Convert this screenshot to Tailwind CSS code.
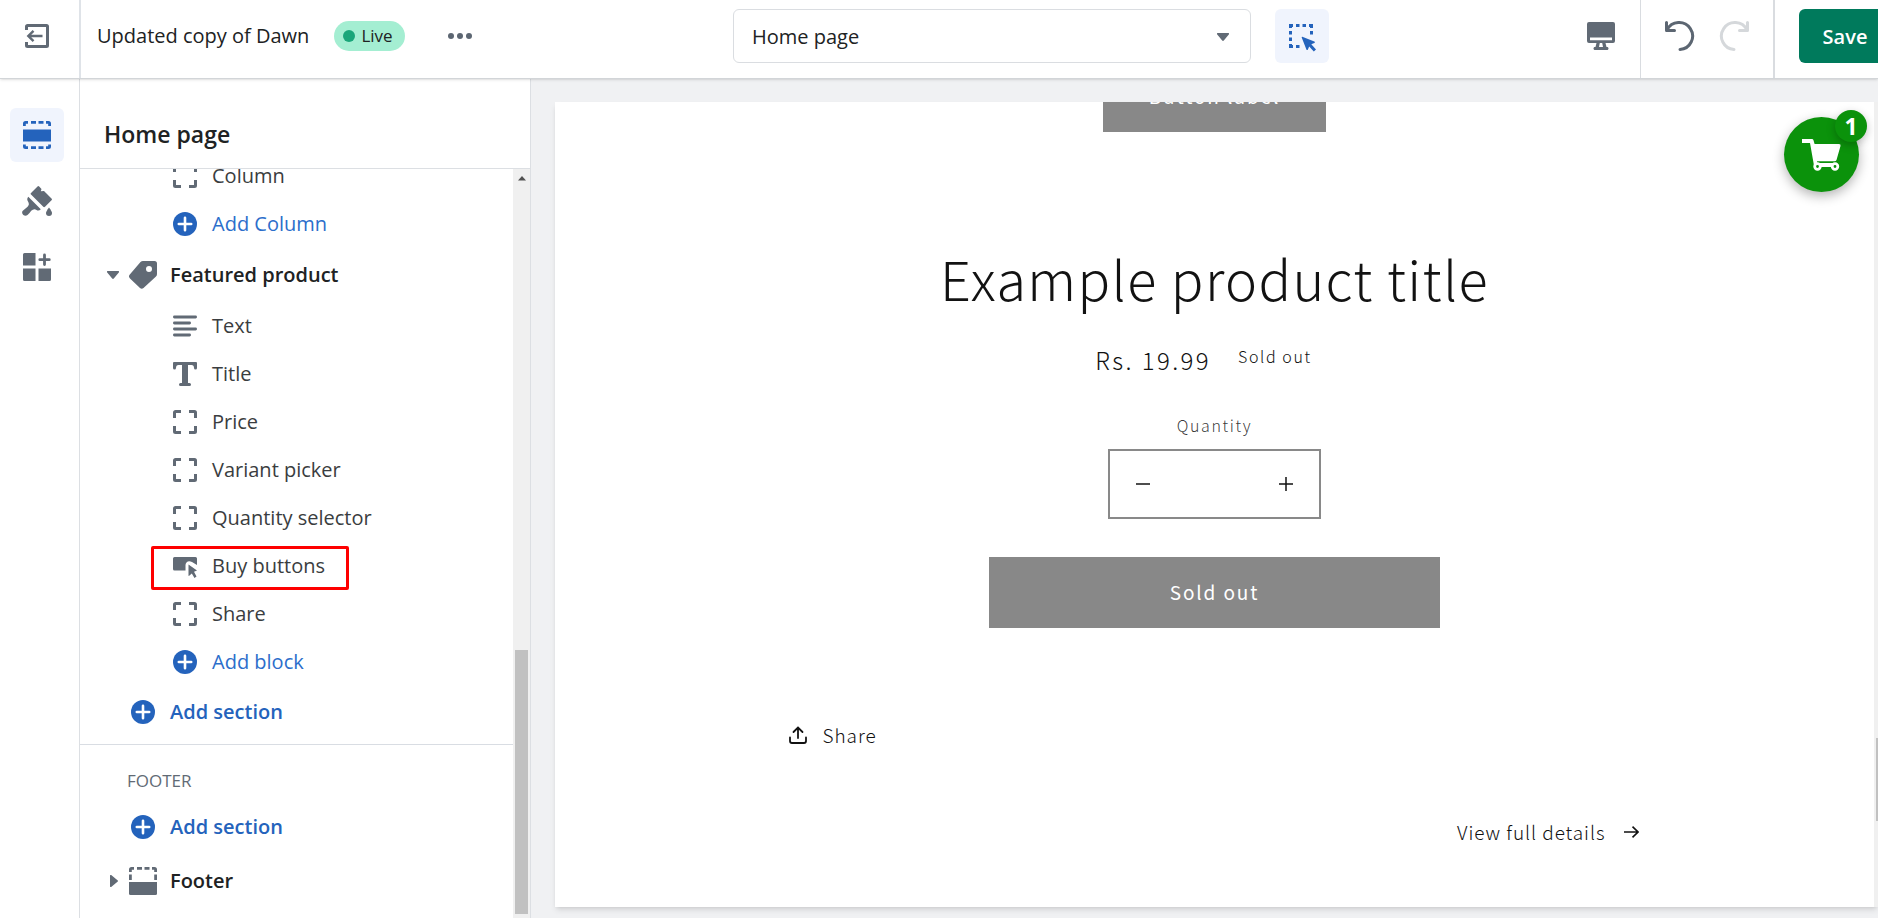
<!DOCTYPE html>
<html lang="en">
<head>
<meta charset="utf-8">
<meta name="viewport" content="width=device-width, initial-scale=1">
<title>Updated copy of Dawn</title>
<script src="https://cdn.jsdelivr.net/npm/@tailwindcss/browser@4"></script>
</head>
<body class="font-['Open_Sans','Noto_Sans',sans-serif] text-[#202223]">
<svg class="hidden" aria-hidden="true">
  <symbol id="block" viewBox="0 0 24 24"><path d="M1.500 8V2.500a1 1 0 0 1 1-1H8M16 1.500h5.500a1 1 0 0 1 1 1V8M22.500 16v5.500a1 1 0 0 1-1 1H16M8 22.500H2.500a1 1 0 0 1-1-1V16" fill="none" stroke="currentColor" stroke-width="3"/></symbol>
  <symbol id="plus" viewBox="0 0 24 24"><circle cx="12" cy="12" r="12" fill="#2463bc"/><path d="M12 5.800v12.400M5.800 12h12.400" stroke="#fff" stroke-width="2.600" stroke-linecap="round"/></symbol>
</svg>
<div class="flex h-screen flex-col overflow-hidden bg-white">
  <header class="relative z-10 flex h-[79px] shrink-0 border-b border-[#d2d5d8] bg-white shadow-sm">
    <div class="flex w-[733px] shrink-0 items-center">
      <div class="flex w-[81px] items-center self-stretch border-r-2 border-[#dfe3e8] pb-[6px] pl-[25px]">
        <button aria-label="Exit" class="text-[#616a75]">
          <svg class="size-6" viewBox="0 0 24 24" fill="none" stroke="currentColor" stroke-width="3"><path d="M1.500 6V2.500a1 1 0 0 1 1-1H21.500a1 1 0 0 1 1 1V21.500a1 1 0 0 1-1 1H2.500a1 1 0 0 1-1-1V18"/><path d="M17.500 12H4M8.500 6.800 3.300 12l5.200 5.200" stroke-width="2.400"/></svg>
        </button>
      </div>
      <div class="flex items-center gap-[25px] pb-[6px] pl-4">
        <h1 class="text-[20px] leading-7">Updated copy of Dawn</h1>
        <span class="flex h-[30px] items-center gap-[6px] rounded-full bg-[#a4eed2] pr-3 pl-[9px] text-[17px] leading-6"><span class="size-3 rounded-full bg-[#1aa67a]"></span>Live</span>
        <button aria-label="More actions" class="ml-[18px] flex gap-[3px]"><span class="size-[6px] rounded-full bg-[#5c6672]"></span><span class="size-[6px] rounded-full bg-[#5c6672]"></span><span class="size-[6px] rounded-full bg-[#5c6672]"></span></button>
      </div>
    </div>
    <div class="flex flex-1 items-start gap-6 pt-[9px]">
      <div class="relative max-w-[518px] flex-1">
        <select aria-label="Page" class="h-[54px] w-full appearance-none rounded-md border border-[#dadde1] bg-white pt-[2px] pl-[18px] text-[20px] text-[#202223]"><option>Home page</option></select>
        <svg class="pointer-events-none absolute top-6 right-[22px] h-2 w-3 text-[#616a75]" viewBox="0 0 12 8" fill="currentColor"><path d="M0 1.200C-.3.500.2 0 .8 0h10.400c.6 0 1.100.500.8 1.200L6.800 7.500c-.4.600-1.200.600-1.600 0z"/></svg>
      </div>
      <button aria-label="Inspector" class="flex size-[54px] items-center justify-center rounded-md bg-[#f0f4fd] pt-1">
        <svg class="h-7 w-[27px] text-[#2463bc]" viewBox="0 0 27 28"><path fill="none" stroke="currentColor" stroke-width="3" d="M0 1.500h4M7 1.500h3.500M13.500 1.500H17M20 1.500h4M1.500 0v4M1.500 7v3.500M1.500 13.500V17M1.500 20v4M0 22.500h4M7 22.500h3.500M22.500 0v4M22.500 7v3.500"/><path fill="currentColor" d="m13.300 12.800 12 4.700c.8.300.8 1.200 0 1.500l-3 1.300 4.700 5.200-2.200 2-4.600-5.100-1.300 3c-.3.800-1.200.7-1.500 0l-4.700-12c-.1-.4.200-.700.600-.600z"/></svg>
      </button>
    </div>
    <div class="flex shrink-0 items-stretch">
      <div class="flex items-center pr-[25px] pb-[6px]">
        <button aria-label="Desktop view" class="text-[#616a75]"><svg class="size-7" viewBox="0 0 28 28"><path fill="currentColor" fill-rule="evenodd" d="M2 0h24a2 2 0 0 1 2 2v17a2 2 0 0 1-2 2h-7.500l1 4H20c1 0 1.500.7 1.500 1.500S21 28 20 28H8c-1 0-1.500-.700-1.500-1.500S7 25 8 25h.500l1-4H2a2 2 0 0 1-2-2V2a2 2 0 0 1 2-2zm1 15.500v2.700h22v-2.700zM12.800 21l-.8 4h4l-.8-4z"/></svg></button>
      </div>
      <div class="flex items-center gap-6 border-r-2 border-l border-[#d9dce0] px-6 pb-[6px]">
        <button aria-label="Undo" class="text-[#5c6672]"><svg class="size-[30px]" viewBox="0 0 30 30" fill="none" stroke="currentColor" stroke-width="3" stroke-linecap="round" stroke-linejoin="round"><path d="M1.500 1.500v8h8M2 9A13.500 13.500 0 1 1 15 28.500"/></svg></button>
        <button aria-label="Redo" disabled class="text-[#d5d8db]"><svg class="size-[30px] -scale-x-100" viewBox="0 0 30 30" fill="none" stroke="currentColor" stroke-width="3" stroke-linecap="round" stroke-linejoin="round"><path d="M1.500 1.500v8h8M2 9A13.500 13.500 0 1 1 15 28.500"/></svg></button>
      </div>
      <div class="pt-[9px] pl-6"><button class="-mr-[13px] h-[54px] w-[92px] rounded-md bg-[#007a5c] pt-[2px] text-[20px] font-semibold text-white">Save</button></div>
    </div>
  </header>

  <div class="flex min-h-0 flex-1">
    <nav class="flex w-20 shrink-0 flex-col gap-3 border-r border-[#dcdfe3] pt-[29px] pl-[10px] text-[#616a75]">
      <button aria-label="Sections" class="flex size-[54px] items-center justify-center rounded-md bg-[#f0f4fd] text-[#2463bc]"><svg class="size-7" viewBox="0 0 28 28"><path fill="currentColor" d="M0 8.500h28v12H0z"/><path fill="none" stroke="currentColor" stroke-width="2.800" d="M1.400 5V2.500q0-1.100 1.100-1.100H5M8 1.400h5M15.500 1.400h5M23 1.400h2.500q1.100 0 1.100 1.100V5M1.400 23.500v2q0 1.100 1.100 1.100H5M8 26.600h5M15.500 26.600h5M23 26.600h2.500q1.100 0 1.100-1.100v-2"/></svg></button>
      <button aria-label="Theme settings" class="flex size-[54px] items-center justify-center"><svg class="size-[30px]" viewBox="0 0 30 30" fill="currentColor"><path d="M15.500.500q.9-.900 1.700 0l2.300 2.500-.7 2.300 3.200-.2 7.500 7.500q.900.900 0 1.700l-6.500 6.500q-.9.800-1.700 0L9 8.500q-.7-.8 0-1.500z"/><path d="m6.300 10.700 12.500 12.500q-2 2-4.300.7-1.800-1-3.700-.2-1.500.6-3.300 3.300l-2 2Q3.500 30.500 1.300 29-.8 26.500.8 24.700l2.400-2q3-2.200 3.500-3.700.500-1.700-.8-3.700-1.500-2.500.4-4.600z"/><path d="M27 21.500q3 4 3 5.500a3 3 0 0 1-6 0q0-1.500 3-5.500z"/></svg></button>
      <button aria-label="App embeds" class="flex size-[54px] items-center justify-center"><svg class="size-7" viewBox="0 0 28 28" fill="currentColor"><path d="M1.500 0h11v12.500H0v-11Q0 0 1.500 0zM0 15.500h12.500V28h-11Q0 28 0 26.500zM15.500 15.500H28v11q0 1.500-1.500 1.500h-11z"/><path d="M21.500 2v9.500M16.800 6.700h9.500" stroke="currentColor" stroke-width="2.800" stroke-linecap="round"/></svg></button>
    </nav>

    <aside class="flex w-[451px] shrink-0 flex-col border-r border-[#dcdfe3]">
      <h2 class="flex h-[90px] shrink-0 items-end border-b border-[#dcdfe3] pb-[18px] pl-6 text-[23px] leading-8 font-semibold">Home page</h2>
      <div class="flex min-h-0 flex-1">
        <div class="min-w-0 flex-1 overflow-hidden">
          <ul class="-mt-[17px] text-[20px] text-[#3a3d40] *:flex *:h-12 *:items-center *:gap-[15px] *:pl-[93px]">
            <li><svg class="size-6 text-[#616a75]"><use href="#block"/></svg><a href="#">Column</a></li>
            <li><svg class="size-6"><use href="#plus"/></svg><button class="text-[#2c6ecb]">Add Column</button></li>
          </ul>
          <div class="flex h-[54px] items-center pl-[27px] text-[#616a75]">
            <svg class="h-2 w-3" viewBox="0 0 12 8" fill="currentColor"><path d="M0 1.200C-.3.500.2 0 .8 0h10.400c.6 0 1.100.500.8 1.200L6.800 7.500c-.4.600-1.200.600-1.600 0z"/></svg>
            <svg class="ml-[10px] size-7" viewBox="0 0 28 28"><path fill="currentColor" fill-rule="evenodd" d="M14 0h11.500Q28 0 28 2.500V13q0 1.500-1 2.500L14.500 27q-1.800 1.500-3.500 0L1 17.500q-2-2-.2-4L11.500 1Q12.500 0 14 0zm6 5a3 3 0 1 0 0 6 3 3 0 0 0 0-6z"/></svg>
            <a href="#" class="ml-[13px] text-[20px] font-semibold text-[#202223]">Featured product</a>
          </div>
          <ul class="text-[20px] text-[#3a3d40] *:flex *:h-12 *:items-center *:gap-[15px] *:pl-[93px]">
            <li><svg class="size-6 text-[#616a75]" viewBox="0 0 24 24" stroke="currentColor" stroke-width="2.800" stroke-linecap="round"><path d="M1.400 3h21.200M1.400 9h15.200M1.400 15h21.200M1.400 21h15.200"/></svg><a href="#">Text</a></li>
            <li><svg class="size-6 text-[#616a75]" viewBox="0 0 24 24" fill="currentColor"><path d="M1 0h22q1 0 1 1v5q0 1.500-1.500 1.500T21 6q0-3-2.500-3H15v18h1.500q1.500 0 1.500 1.500T16.500 24h-9Q6 24 6 22.500T7.500 21H9V3H5.500Q3 3 3 6q0 1.500-1.500 1.500T0 6V1q0-1 1-1z"/></svg><a href="#">Title</a></li>
            <li><svg class="size-6 text-[#616a75]"><use href="#block"/></svg><a href="#">Price</a></li>
            <li><svg class="size-6 text-[#616a75]"><use href="#block"/></svg><a href="#">Variant picker</a></li>
            <li><svg class="size-6 text-[#616a75]"><use href="#block"/></svg><a href="#">Quantity selector</a></li>
            <li class="relative"><svg class="size-6 text-[#616a75]" viewBox="0 0 24 24" fill="currentColor"><path d="M1.500 3h21Q24 3 24 4.500v6.500l-5-3q-3.500-1.500-5.500.5-1 1-1 2.500v5.500h-11Q0 16.500 0 15V4.500Q0 3 1.500 3z"/><path d="m15.500 10.500 8.500 6-3 1.300 2.500 4.700-2 1.500-2.700-4.600-2.600 2.400q-.7.500-.7-.5z"/></svg><a href="#">Buy buttons</a>
              <span class="pointer-events-none absolute top-1 left-[71px] h-11 w-[198px] rounded-xs border-3 border-[#fe0000]"></span></li>
            <li><svg class="size-6 text-[#616a75]"><use href="#block"/></svg><a href="#">Share</a></li>
            <li><svg class="size-6"><use href="#plus"/></svg><button class="text-[#2c6ecb]">Add block</button></li>
          </ul>
          <div class="flex h-[59px] items-start border-b border-[#d9dde3] pt-3 pl-[51px]">
            <button class="flex items-center gap-[15px] text-[20px] leading-7 font-semibold text-[#2463bc]"><svg class="size-6"><use href="#plus"/></svg>Add section</button>
          </div>
          <h3 class="pt-6 pl-[47px] text-[17px] leading-6 text-[#616a75]">FOOTER</h3>
          <div class="pt-5 pl-[51px]">
            <button class="flex items-center gap-[15px] text-[20px] leading-7 font-semibold text-[#2463bc]"><svg class="size-6"><use href="#plus"/></svg>Add section</button>
          </div>
          <div class="flex items-center pt-[26px] pl-[30px] text-[#616a75]">
            <svg class="h-3 w-2" viewBox="0 0 8 12" fill="currentColor"><path d="M1.200 0C.5-.3 0 .2 0 .8v10.400c0 .6.500 1.100 1.200.8l6.300-5.200c.600-.4.600-1.200 0-1.600z"/></svg>
            <svg class="ml-[11px] size-7" viewBox="0 0 28 28"><path fill="currentColor" d="M0 15h28v11.500q0 1.500-1.500 1.500h-25Q0 28 0 26.500z"/><path fill="none" stroke="currentColor" stroke-width="2.800" d="M1.400 5V2.500q0-1.100 1.100-1.100H5M8 1.400h5M15.500 1.400h5M23 1.400h2.500q1.100 0 1.100 1.100V5M1.400 7.500V13M26.600 7.500V13"/></svg>
            <a href="#" class="ml-[13px] text-[20px] leading-7 font-semibold text-[#202223]">Footer</a>
          </div>
        </div>
        <div class="flex w-[17px] shrink-0 flex-col items-center bg-[#f0f0f0] pt-[7px] pb-1">
          <svg class="h-[5px] w-2" viewBox="0 0 8 5"><path fill="#505050" d="M4 0l4 4.500H0z"/></svg>
          <div class="mt-auto h-[264px] w-[13px] bg-[#c1c1c1]"></div>
        </div>
      </div>
    </aside>

    <main class="flex min-w-0 flex-1 bg-[#f0f1f3] pt-[23px] pb-[11px] pl-6">
      <div class="flex flex-1 bg-white font-['Noto_Sans_CJK_JP','Source_Sans_Pro',sans-serif] font-light text-[#121212] shadow-md">
        <div class="relative flex min-w-0 flex-1 flex-col items-center overflow-hidden">
          <button disabled class="-mt-[41px] h-[71px] w-[223px] shrink-0 bg-[#888] text-[19px] font-normal tracking-widest text-white">Button label</button>
          <h2 class="mt-[110px] text-[54px] leading-[72px] tracking-wide">Example product title</h2>
          <div class="mt-7 flex gap-[27px] pr-[22px]"><span class="text-[24px] leading-9 tracking-widest">Rs. 19.99</span><span class="text-[16px] leading-7 tracking-widest">Sold out</span></div>
          <label for="qty" class="mt-[35px] text-[16px] leading-6 tracking-widest text-[#121212]/85">Quantity</label>
          <div class="mt-3 flex h-[70px] w-[213px] border-2 border-[#898989]">
            <button aria-label="Decrease quantity" class="flex w-[66px] items-center justify-center"><svg class="size-[14px]" viewBox="0 0 14 14" stroke="#121212" stroke-width="1.500"><path d="M0 7h14"/></svg></button>
            <input id="qty" type="text" class="min-w-0 flex-1 text-center outline-none">
            <button aria-label="Increase quantity" class="flex w-[66px] items-center justify-center"><svg class="size-[14px]" viewBox="0 0 14 14" stroke="#121212" stroke-width="1.500"><path d="M0 7h14M7 0v14"/></svg></button>
          </div>
          <button disabled class="mt-[38px] h-[71px] w-[451px] shrink-0 bg-[#888] text-[19px] font-normal tracking-widest text-white">Sold out</button>
          <div class="mt-[93px] flex w-[852px] flex-col">
            <button class="flex items-center gap-4 self-start text-[19px] leading-7 tracking-wider"><svg class="size-[18px]" viewBox="0 0 18 18" fill="none" stroke="#121212" stroke-width="1.800" stroke-linecap="round"><path d="M1 11.500V15q0 2 2 2h12q2 0 2-2v-3.500M9 12V2M4.500 6 9 1.600 13.500 6"/></svg>Share</button>
            <a href="#" class="mt-[69px] flex items-center gap-[18px] self-end pr-[2px] text-[19px] leading-7 tracking-wider">View full details<svg class="h-3 w-[15px]" viewBox="0 0 15 12" fill="none" stroke="#121212" stroke-width="1.600"><path d="M0 6h14M8.500.600 14 6l-5.500 5.400"/></svg></a>
          </div>
          <button aria-label="Cart, 1 item" class="absolute top-[15px] right-[15px] flex size-[75px] items-center justify-center rounded-full bg-[#0b920b] shadow-[0_4px_12px_rgba(0,0,0,0.3)]">
            <svg class="h-8 w-[39px]" viewBox="0 0 39 32"><path fill="#fff" d="M0 0h10q1 0 1.400 1l1.200 4H37q2 0 1.500 2L34.500 21q-.5 1.300-2 1.300H15l.3 1.700h17v4h-17q-3 0-3.500-2.500L8 4H0z"/><circle cx="15.500" cy="27.500" r="2.800" fill="#0b920b" stroke="#fff" stroke-width="2.800"/><circle cx="33" cy="27.500" r="2.800" fill="#0b920b" stroke="#fff" stroke-width="2.800"/></svg>
            <span class="absolute -top-[7px] -right-2 flex size-8 items-center justify-center rounded-full bg-[#0b920b] font-['Open_Sans',sans-serif] text-[23px] leading-8 font-bold text-white shadow-[0_3px_8px_rgba(0,0,0,0.25)]">1</span>
          </button>
        </div>
        <div class="flex w-1 shrink-0 flex-col items-end bg-[#f0f0f0] pt-[636px]"><div class="h-[83px] w-[2px] bg-[#c1c1c1]"></div></div>
      </div>
    </main>
  </div>
</div>
</body>
</html>
